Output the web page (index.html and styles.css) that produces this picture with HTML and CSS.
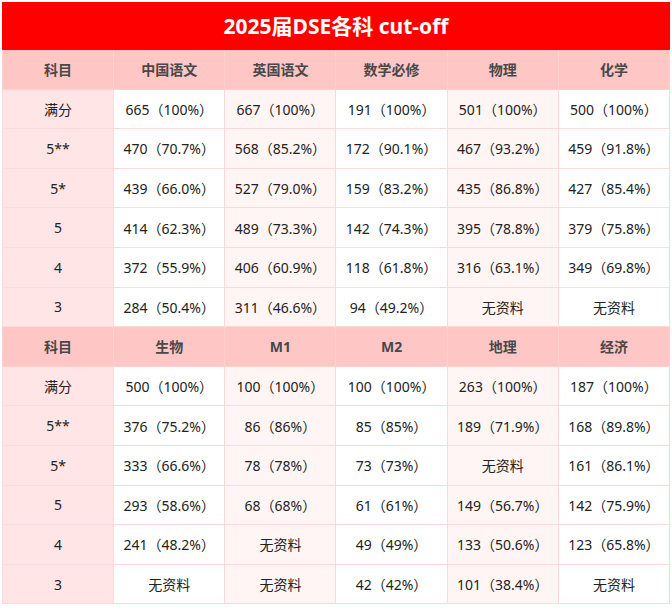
FILE: index.html
```html
<!DOCTYPE html>
<html lang="zh">
<head>
<meta charset="utf-8">
<title>2025届DSE各科 cut-off</title>
<link rel="stylesheet" href="styles.css">
</head>
<body>
<div class="wrap">
<table class="cut">
<colgroup><col><col><col><col><col><col></colgroup>
<tr><th class="title" colspan="6">2025届DSE各科 cut-off</th></tr>
<tr class="head"><th>科目</th><th>中国语文</th><th>英国语文</th><th>数学必修</th><th>物理</th><th>化学</th></tr>
<tr><td class="lab">满分</td><td>665（100%）</td><td>667（100%）</td><td>191（100%）</td><td>501（100%）</td><td>500（100%）</td></tr>
<tr><td class="lab">5**</td><td>470（70.7%）</td><td>568（85.2%）</td><td>172（90.1%）</td><td>467（93.2%）</td><td>459（91.8%）</td></tr>
<tr><td class="lab">5*</td><td>439（66.0%）</td><td>527（79.0%）</td><td>159（83.2%）</td><td>435（86.8%）</td><td>427（85.4%）</td></tr>
<tr><td class="lab">5</td><td>414（62.3%）</td><td>489（73.3%）</td><td>142（74.3%）</td><td>395（78.8%）</td><td>379（75.8%）</td></tr>
<tr><td class="lab">4</td><td>372（55.9%）</td><td>406（60.9%）</td><td>118（61.8%）</td><td>316（63.1%）</td><td>349（69.8%）</td></tr>
<tr><td class="lab">3</td><td>284（50.4%）</td><td>311（46.6%）</td><td>94（49.2%）</td><td>无资料</td><td>无资料</td></tr>
<tr class="head"><th>科目</th><th>生物</th><th>M1</th><th>M2</th><th>地理</th><th>经济</th></tr>
<tr><td class="lab">满分</td><td>500（100%）</td><td>100（100%）</td><td>100（100%）</td><td>263（100%）</td><td>187（100%）</td></tr>
<tr><td class="lab">5**</td><td>376（75.2%）</td><td>86（86%）</td><td>85（85%）</td><td>189（71.9%）</td><td>168（89.8%）</td></tr>
<tr><td class="lab">5*</td><td>333（66.6%）</td><td>78（78%）</td><td>73（73%）</td><td>无资料</td><td>161（86.1%）</td></tr>
<tr><td class="lab">5</td><td>293（58.6%）</td><td>68（68%）</td><td>61（61%）</td><td>149（56.7%）</td><td>142（75.9%）</td></tr>
<tr><td class="lab">4</td><td>241（48.2%）</td><td>无资料</td><td>49（49%）</td><td>133（50.6%）</td><td>123（65.8%）</td></tr>
<tr><td class="lab">3</td><td>无资料</td><td>无资料</td><td>42（42%）</td><td>101（38.4%）</td><td>无资料</td></tr>
</table>
</div>
</body>
</html>
```
FILE: styles.css
```css
html, body {
  margin: 0;
  padding: 0;
  background: #ffffff;
}
.wrap {
  padding: 2px 0 0 2px;
}
.cut {
  border-collapse: collapse;
  table-layout: fixed;
  width: 668px;
  border: 1px solid #ffd9d9;
  font-family: "Noto Sans", "Noto Sans CJK SC", sans-serif;
  font-size: 14px;
  color: #222222;
}
.cut td, .cut th {
  border: 1px solid #ffd9d9;
  text-align: center;
  padding: 0;
  height: 38.6px;
  white-space: nowrap;
}
.cut .title {
  background: #ff0000;
  color: #ffffff;
  font-size: 21px;
  font-weight: bold;
  height: 44px;
  padding-bottom: 2px;
  border-color: #ff0000;
}
.head th {
  background: #ffc6c6;
  color: #484848;
  font-weight: bold;
  border-color: #ffd0d0;
}
.cut td.lab {
  background: #ffe5e5;
}
.cut td:nth-child(3), .cut td:nth-child(5) {
  background: #fff5f5;
}
```
